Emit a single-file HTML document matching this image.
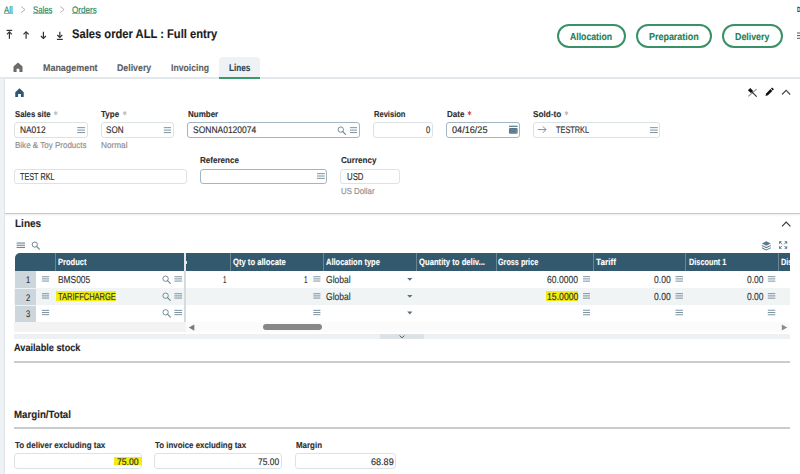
<!DOCTYPE html>
<html><head><meta charset="utf-8"><title>Sales order</title>
<style>
*{box-sizing:border-box;margin:0;padding:0}
html,body{width:800px;height:474px;overflow:hidden;background:#fff;font-family:"Liberation Sans",sans-serif}
body{position:relative}
.t{position:absolute;white-space:nowrap;transform-origin:0 0;text-rendering:geometricPrecision}
.r{position:absolute;overflow:visible}
</style></head><body>
<div class="r" style="left:0px;top:78px;width:4px;height:396px;background:#eef2f4"></div>
<div class="r" style="left:4px;top:78px;width:1px;height:396px;background:#dde3e7"></div>
<div class="t" style="left:4.40px;top:5.50px;font-size:9.45px;line-height:9.45px;color:#2b8663;transform:scaleX(0.828);-webkit-text-stroke:0.15px #2b8663;">All</div>
<div class="t" style="left:32.75px;top:5.50px;font-size:9.45px;line-height:9.45px;color:#2b8663;transform:scaleX(0.825);-webkit-text-stroke:0.15px #2b8663;">Sales</div>
<div class="t" style="left:71.50px;top:5.50px;font-size:9.45px;line-height:9.45px;color:#2b8663;transform:scaleX(0.857);-webkit-text-stroke:0.15px #2b8663;">Orders</div>
<div class="r" style="left:4.4px;top:12.6px;width:8.7px;height:1.0px;background:#86bfa4"></div>
<div class="r" style="left:32.75px;top:12.6px;width:19.5px;height:1.0px;background:#86bfa4"></div>
<div class="r" style="left:71.5px;top:12.6px;width:24.75px;height:1.0px;background:#86bfa4"></div>
<svg class="r" style="left:0;top:0" width="800" height="20"><polyline points="21.2,6.6 25,9.6 21.2,12.6" fill="none" stroke="#b4b4b4" stroke-width="1"/><polyline points="60.3,6.6 64.1,9.6 60.3,12.6" fill="none" stroke="#b4b4b4" stroke-width="1"/></svg>
<svg class="r" style="left:0;top:24px" width="70" height="20" viewBox="0 24 70 20">
<g stroke="#333" stroke-width="1.2" fill="none">
<line x1="6.6" y1="30.4" x2="12.2" y2="30.4"/><line x1="9.4" y1="32" x2="9.4" y2="38.7"/><polyline points="7,34.3 9.4,31.9 11.8,34.3"/>
<line x1="26.1" y1="31.9" x2="26.1" y2="38.7"/><polyline points="23.5,34.4 26.1,31.8 28.7,34.4"/>
<line x1="43.4" y1="31.7" x2="43.4" y2="38.4"/><polyline points="40.9,36 43.4,38.5 45.9,36"/>
<line x1="59.8" y1="31.7" x2="59.8" y2="37.4"/><polyline points="57.3,35 59.8,37.5 62.3,35"/><line x1="56.9" y1="39.4" x2="62.8" y2="39.4"/>
</g></svg>
<div class="t" style="left:71.70px;top:28.00px;font-size:12.50px;line-height:12.50px;font-weight:bold;color:#1a1a1a;transform:scaleX(0.894);-webkit-text-stroke:0.12px #1a1a1a;">Sales order ALL : Full entry</div>
<div class="r" style="left:557px;top:24px;width:69px;height:24px;border:2px solid #3a9168;border-radius:12px"></div>
<div class="r" style="left:635.5px;top:24px;width:76.5px;height:24px;border:2px solid #3a9168;border-radius:12px"></div>
<div class="r" style="left:721.5px;top:24px;width:61.0px;height:24px;border:2px solid #3a9168;border-radius:12px"></div>
<div class="t" style="left:570.00px;top:32.50px;font-size:10.05px;line-height:10.05px;font-weight:bold;color:#1d7f52;transform:scaleX(0.865);-webkit-text-stroke:0.12px #1d7f52;">Allocation</div>
<div class="t" style="left:648.70px;top:32.50px;font-size:10.05px;line-height:10.05px;font-weight:bold;color:#1d7f52;transform:scaleX(0.890);-webkit-text-stroke:0.12px #1d7f52;">Preparation</div>
<div class="t" style="left:734.80px;top:32.50px;font-size:10.05px;line-height:10.05px;font-weight:bold;color:#1d7f52;transform:scaleX(0.879);-webkit-text-stroke:0.12px #1d7f52;">Delivery</div>
<div class="t" style="left:797.40px;top:6.10px;font-size:7.55px;line-height:7.55px;font-weight:bold;color:#1e3f5c;transform:scaleX(0.660);-webkit-text-stroke:0.12px #1e3f5c;">D</div>
<svg class="r" style="left:0;top:0" width="800" height="474"><line x1="797" y1="33.00" x2="804" y2="33.00" stroke="#555" stroke-width="1"/><line x1="797" y1="35.65" x2="804" y2="35.65" stroke="#555" stroke-width="1"/><line x1="797" y1="38.30" x2="804" y2="38.30" stroke="#555" stroke-width="1"/></svg>
<div class="r" style="left:219px;top:57px;width:41px;height:20px;background:#eef2f4;border-radius:4px 4px 0 0"></div>
<svg class="r" style="left:13px;top:62px" width="10" height="10" viewBox="0 0 10 10"><path d="M0.5 4.6 L5 0.5 L9.5 4.6 V10 H6.4 V6.8 H3.6 V10 H0.5 Z" fill="#6b6b6b"/></svg>
<div class="t" style="left:42.60px;top:63.70px;font-size:9.75px;line-height:9.75px;font-weight:bold;color:#5e5e5e;transform:scaleX(0.916);-webkit-text-stroke:0.12px #5e5e5e;">Management</div>
<div class="t" style="left:117.40px;top:63.70px;font-size:9.75px;line-height:9.75px;font-weight:bold;color:#5e5e5e;transform:scaleX(0.901);-webkit-text-stroke:0.12px #5e5e5e;">Delivery</div>
<div class="t" style="left:171.00px;top:63.70px;font-size:9.75px;line-height:9.75px;font-weight:bold;color:#5e5e5e;transform:scaleX(0.888);-webkit-text-stroke:0.12px #5e5e5e;">Invoicing</div>
<div class="t" style="left:228.60px;top:63.50px;font-size:9.90px;line-height:9.90px;font-weight:bold;color:#2a4658;transform:scaleX(0.827);-webkit-text-stroke:0.12px #2a4658;">Lines</div>
<div class="r" style="left:0px;top:77px;width:800px;height:1.5px;background:#e3e8ec"></div>
<div class="r" style="left:219px;top:77px;width:41px;height:2px;background:#3b9a6b"></div>
<svg class="r" style="left:15px;top:88px" width="9" height="9" viewBox="0 0 10 10"><path d="M0.3 4.6 L5 0.3 L9.7 4.6 V10 H6.6 V6.8 H3.4 V10 H0.3 Z" fill="#2b5872"/></svg>
<svg class="r" style="left:740px;top:84px" width="60" height="16" viewBox="740 84 60 16">
<line x1="748.3" y1="96.4" x2="756.6" y2="89.2" stroke="#8f8f8f" stroke-width="1.1"/>
<line x1="751.5" y1="91.6" x2="756.7" y2="96.6" stroke="#2a2a2a" stroke-width="1.1"/>
<path d="M747.9 90.2 L750.3 87.9 L753.2 90.9 L750.9 93.1 Z" fill="#111"/>
<path d="M765.50 95.90 L767.97 95.26 L772.32 90.92 L770.48 89.08 L766.14 93.43 Z" fill="#111"/><line x1="771.89" y1="89.51" x2="773.03" y2="88.37" stroke="#111" stroke-width="2.6" stroke-linecap="butt"/>
<polyline points="782,94.5 786.1,90.3 790.2,94.5" fill="none" stroke="#444" stroke-width="1.1"/>
</svg>
<div class="t" style="left:14.60px;top:109.70px;font-size:8.70px;line-height:8.70px;font-weight:bold;color:#2e2e2e;transform:scaleX(0.889);-webkit-text-stroke:0.12px #2e2e2e;">Sales site</div>
<div class="t" style="left:101.25px;top:109.70px;font-size:8.70px;line-height:8.70px;font-weight:bold;color:#2e2e2e;transform:scaleX(0.923);-webkit-text-stroke:0.12px #2e2e2e;">Type</div>
<div class="t" style="left:188.00px;top:109.70px;font-size:8.70px;line-height:8.70px;font-weight:bold;color:#2e2e2e;transform:scaleX(0.920);-webkit-text-stroke:0.12px #2e2e2e;">Number</div>
<div class="t" style="left:373.90px;top:109.70px;font-size:8.70px;line-height:8.70px;font-weight:bold;color:#2e2e2e;transform:scaleX(0.869);-webkit-text-stroke:0.12px #2e2e2e;">Revision</div>
<div class="t" style="left:446.80px;top:109.70px;font-size:8.70px;line-height:8.70px;font-weight:bold;color:#2e2e2e;transform:scaleX(0.923);-webkit-text-stroke:0.12px #2e2e2e;">Date</div>
<div class="t" style="left:532.90px;top:109.70px;font-size:8.70px;line-height:8.70px;font-weight:bold;color:#2e2e2e;transform:scaleX(0.945);-webkit-text-stroke:0.12px #2e2e2e;">Sold-to</div>
<svg class="r" style="left:0;top:0" width="800" height="474"><line x1="55.80" y1="111.10" x2="55.80" y2="115.30" stroke="#b5b5b5" stroke-width="0.9"/><line x1="53.98" y1="112.15" x2="57.62" y2="114.25" stroke="#b5b5b5" stroke-width="0.9"/><line x1="57.62" y1="112.15" x2="53.98" y2="114.25" stroke="#b5b5b5" stroke-width="0.9"/></svg>
<svg class="r" style="left:0;top:0" width="800" height="474"><line x1="124.80" y1="111.10" x2="124.80" y2="115.30" stroke="#b5b5b5" stroke-width="0.9"/><line x1="122.98" y1="112.15" x2="126.62" y2="114.25" stroke="#b5b5b5" stroke-width="0.9"/><line x1="126.62" y1="112.15" x2="122.98" y2="114.25" stroke="#b5b5b5" stroke-width="0.9"/></svg>
<svg class="r" style="left:0;top:0" width="800" height="474"><line x1="566.45" y1="111.10" x2="566.45" y2="115.30" stroke="#b5b5b5" stroke-width="0.9"/><line x1="564.63" y1="112.15" x2="568.27" y2="114.25" stroke="#b5b5b5" stroke-width="0.9"/><line x1="568.27" y1="112.15" x2="564.63" y2="114.25" stroke="#b5b5b5" stroke-width="0.9"/></svg>
<svg class="r" style="left:0;top:0" width="800" height="474"><line x1="469.50" y1="111.10" x2="469.50" y2="115.30" stroke="#c8434a" stroke-width="0.9"/><line x1="467.68" y1="112.15" x2="471.32" y2="114.25" stroke="#c8434a" stroke-width="0.9"/><line x1="471.32" y1="112.15" x2="467.68" y2="114.25" stroke="#c8434a" stroke-width="0.9"/></svg>
<div class="r" style="left:14px;top:122px;width:74px;height:16px;border:1px solid #dce3e7;border-radius:3px;background:#fff"></div>
<div class="r" style="left:101px;top:122px;width:73px;height:16px;border:1px solid #dce3e7;border-radius:3px;background:#fff"></div>
<div class="r" style="left:187px;top:122px;width:173px;height:16px;border:1px solid #a3b5c0;border-radius:3px;background:#fff"></div>
<div class="r" style="left:373px;top:122px;width:60px;height:16px;border:1px solid #dce3e7;border-radius:3px;background:#fff"></div>
<div class="r" style="left:446px;top:122px;width:74px;height:16px;border:1px solid #a3b5c0;border-radius:3px;background:#fff"></div>
<div class="r" style="left:533px;top:122px;width:127px;height:16px;border:1px solid #dce3e7;border-radius:3px;background:#fff"></div>
<div class="t" style="left:19.80px;top:126.00px;font-size:9.60px;line-height:9.60px;color:#2f2f2f;transform:scaleX(0.872);-webkit-text-stroke:0.15px #2f2f2f;">NA012</div>
<div class="t" style="left:106.00px;top:126.00px;font-size:9.60px;line-height:9.60px;color:#2f2f2f;transform:scaleX(0.841);-webkit-text-stroke:0.15px #2f2f2f;">SON</div>
<div class="t" style="left:192.50px;top:126.00px;font-size:9.60px;line-height:9.60px;color:#2f2f2f;transform:scaleX(0.884);-webkit-text-stroke:0.15px #2f2f2f;">SONNA0120074</div>
<div class="t" style="left:425.60px;top:126.00px;font-size:9.60px;line-height:9.60px;color:#2f2f2f;transform:scaleX(0.788);-webkit-text-stroke:0.15px #2f2f2f;">0</div>
<div class="t" style="left:451.70px;top:126.00px;font-size:9.60px;line-height:9.60px;color:#2f2f2f;transform:scaleX(0.950);-webkit-text-stroke:0.15px #2f2f2f;">04/16/25</div>
<div class="t" style="left:555.60px;top:126.00px;font-size:9.60px;line-height:9.60px;color:#2f2f2f;transform:scaleX(0.767);-webkit-text-stroke:0.15px #2f2f2f;">TESTRKL</div>
<svg class="r" style="left:0;top:0" width="800" height="474"><line x1="77.2" y1="127.65" x2="85" y2="127.65" stroke="#6d8795" stroke-width="0.9"/><line x1="77.2" y1="130.10" x2="85" y2="130.10" stroke="#6d8795" stroke-width="0.9"/><line x1="77.2" y1="132.55" x2="85" y2="132.55" stroke="#6d8795" stroke-width="0.9"/></svg>
<svg class="r" style="left:0;top:0" width="800" height="474"><line x1="163.8" y1="127.65" x2="171" y2="127.65" stroke="#6d8795" stroke-width="0.9"/><line x1="163.8" y1="130.10" x2="171" y2="130.10" stroke="#6d8795" stroke-width="0.9"/><line x1="163.8" y1="132.55" x2="171" y2="132.55" stroke="#6d8795" stroke-width="0.9"/></svg>
<svg class="r" style="left:0;top:0" width="800" height="474"><line x1="350" y1="127.65" x2="357" y2="127.65" stroke="#6d8795" stroke-width="0.9"/><line x1="350" y1="130.10" x2="357" y2="130.10" stroke="#6d8795" stroke-width="0.9"/><line x1="350" y1="132.55" x2="357" y2="132.55" stroke="#6d8795" stroke-width="0.9"/></svg>
<svg class="r" style="left:0;top:0" width="800" height="474"><circle cx="340.8" cy="129.6" r="2.7" fill="none" stroke="#6d8795" stroke-width="0.95"/><line x1="342.69" y1="131.49" x2="345.53" y2="134.32" stroke="#6d8795" stroke-width="1.14" stroke-linecap="round"/></svg>
<svg class="r" style="left:0;top:0" width="800" height="474"><line x1="650" y1="127.65" x2="657.8" y2="127.65" stroke="#6d8795" stroke-width="0.9"/><line x1="650" y1="130.10" x2="657.8" y2="130.10" stroke="#6d8795" stroke-width="0.9"/><line x1="650" y1="132.55" x2="657.8" y2="132.55" stroke="#6d8795" stroke-width="0.9"/></svg>
<svg class="r" style="left:0;top:0" width="800" height="474"><g stroke="#7790a0" stroke-width="1.0" fill="none"><line x1="537.8" y1="129.6" x2="546" y2="129.6"/><polyline points="542.8,126.4 546,129.6 542.8,132.8"/></g></svg>
<svg class="r" style="left:0;top:0" width="800" height="474"><rect x="509" y="125.7" width="8.6" height="1.2" fill="#56778a"/><rect x="509" y="128.1" width="8.6" height="5.7" rx="1.1" fill="#56778a"/><rect x="510.6" y="129.6" width="0.9" height="0.9" fill="#8ea6b4"/><rect x="512.6" y="129.6" width="0.9" height="0.9" fill="#8ea6b4"/><rect x="514.6" y="129.6" width="0.9" height="0.9" fill="#8ea6b4"/><rect x="516.1" y="129.6" width="0.9" height="0.9" fill="#8ea6b4"/><rect x="510.6" y="131.8" width="0.9" height="0.9" fill="#8ea6b4"/><rect x="512.6" y="131.8" width="0.9" height="0.9" fill="#8ea6b4"/><rect x="514.6" y="131.8" width="0.9" height="0.9" fill="#8ea6b4"/><rect x="516.1" y="131.8" width="0.9" height="0.9" fill="#8ea6b4"/></svg>
<div class="t" style="left:14.60px;top:141.00px;font-size:8.70px;line-height:8.70px;color:#8d8d8d;transform:scaleX(0.922);-webkit-text-stroke:0.15px #8d8d8d;">Bike &amp; Toy Products</div>
<div class="t" style="left:101.00px;top:141.00px;font-size:8.70px;line-height:8.70px;color:#8d8d8d;transform:scaleX(0.945);-webkit-text-stroke:0.15px #8d8d8d;">Normal</div>
<div class="t" style="left:200.45px;top:156.20px;font-size:8.70px;line-height:8.70px;font-weight:bold;color:#2e2e2e;transform:scaleX(0.928);-webkit-text-stroke:0.12px #2e2e2e;">Reference</div>
<div class="t" style="left:340.70px;top:156.20px;font-size:8.70px;line-height:8.70px;font-weight:bold;color:#2e2e2e;transform:scaleX(0.929);-webkit-text-stroke:0.12px #2e2e2e;">Currency</div>
<div class="r" style="left:14px;top:169px;width:173px;height:15px;border:1px solid #dce3e7;border-radius:3px;background:#fff"></div>
<div class="r" style="left:200px;top:169px;width:127px;height:15px;border:1px solid #a3b5c0;border-radius:3px;background:#fff"></div>
<div class="r" style="left:340px;top:169px;width:60px;height:15px;border:1px solid #dce3e7;border-radius:3px;background:#fff"></div>
<div class="t" style="left:20.00px;top:173.00px;font-size:10.05px;line-height:10.05px;color:#2f2f2f;transform:scaleX(0.721);-webkit-text-stroke:0.15px #2f2f2f;">TEST RKL</div>
<div class="t" style="left:346.80px;top:173.00px;font-size:10.05px;line-height:10.05px;color:#2f2f2f;transform:scaleX(0.777);-webkit-text-stroke:0.15px #2f2f2f;">USD</div>
<svg class="r" style="left:0;top:0" width="800" height="474"><line x1="317" y1="173.65" x2="324.8" y2="173.65" stroke="#6d8795" stroke-width="0.9"/><line x1="317" y1="176.00" x2="324.8" y2="176.00" stroke="#6d8795" stroke-width="0.9"/><line x1="317" y1="178.35" x2="324.8" y2="178.35" stroke="#6d8795" stroke-width="0.9"/></svg>
<div class="t" style="left:340.70px;top:187.00px;font-size:8.70px;line-height:8.70px;color:#8d8d8d;transform:scaleX(0.902);-webkit-text-stroke:0.15px #8d8d8d;">US Dollar</div>
<div class="r" style="left:5px;top:212.5px;width:795px;height:1.8000000000000114px;background:#c3c9cd;box-shadow:0 1px 2px rgba(0,0,0,0.12)"></div>
<div class="t" style="left:14.50px;top:218.70px;font-size:10.90px;line-height:10.90px;font-weight:bold;color:#1e1e1e;transform:scaleX(0.918);-webkit-text-stroke:0.12px #1e1e1e;">Lines</div>
<svg class="r" style="left:0;top:0" width="800" height="474"><polyline points="782,226.3 786.2,222 790.4,226.3" fill="none" stroke="#333" stroke-width="1.1"/></svg>
<svg class="r" style="left:0;top:0" width="800" height="474"><line x1="16.6" y1="243.05" x2="25" y2="243.05" stroke="#6d8795" stroke-width="1.1"/><line x1="16.6" y1="245.25" x2="25" y2="245.25" stroke="#6d8795" stroke-width="1.1"/><line x1="16.6" y1="247.45" x2="25" y2="247.45" stroke="#6d8795" stroke-width="1.1"/></svg>
<svg class="r" style="left:0;top:0" width="800" height="474"><circle cx="34.8" cy="244.6" r="2.6" fill="none" stroke="#6d8795" stroke-width="1.0"/><line x1="36.62" y1="246.42" x2="39.35" y2="249.15" stroke="#6d8795" stroke-width="1.2" stroke-linecap="round"/></svg>
<svg class="r" style="left:0;top:0" width="800" height="474"><g fill="#5a7a8d">
<path d="M766.3 241.3 L770.8 243.5 L766.3 245.7 L761.8 243.5 Z"/>
<path d="M761.8 244.9 L766.3 247.1 L770.8 244.9 L770.8 246.0 L766.3 248.2 L761.8 246.0 Z"/>
<path d="M761.8 247.2 L766.3 249.4 L770.8 247.2 L770.8 248.3 L766.3 250.5 L761.8 248.3 Z"/>
</g>
<g fill="#5a7a8d">
<path d="M779 241.2 L782 241.2 L779 244.2 Z"/><path d="M787.2 241.2 L784.2 241.2 L787.2 244.2 Z"/>
<path d="M779 248.8 L782 248.8 L779 245.8 Z"/><path d="M787.2 248.8 L784.2 248.8 L787.2 245.8 Z"/>
</g>
<g stroke="#5a7a8d" stroke-width="0.9">
<line x1="780" y1="242.2" x2="782" y2="244.2"/><line x1="786.2" y1="242.2" x2="784.2" y2="244.2"/>
<line x1="780" y1="247.8" x2="782" y2="245.8"/><line x1="786.2" y1="247.8" x2="784.2" y2="245.8"/>
</g></svg>
<div class="r" style="left:14.5px;top:252.9px;width:169.8px;height:18px;background:#32596d;border-radius:5px 0 0 0"></div>
<div class="r" style="left:186.1px;top:252.9px;width:604.1999999999999px;height:17.99999999999997px;background:#32596d"></div>
<div class="r" style="left:35.6px;top:252.9px;width:0.8999999999999986px;height:17.99999999999997px;background:repeating-linear-gradient(#8aa0ac 0 1px,#4a6d80 1px 2px)"></div>
<div class="r" style="left:55.2px;top:252.9px;width:0.7999999999999972px;height:17.99999999999997px;background:#6a8594"></div>
<div class="r" style="left:230.1px;top:252.9px;width:0.8000000000000114px;height:17.99999999999997px;background:#6a8594"></div>
<div class="r" style="left:323.4px;top:252.9px;width:0.8000000000000114px;height:17.99999999999997px;background:#6a8594"></div>
<div class="r" style="left:415.6px;top:252.9px;width:0.8000000000000114px;height:17.99999999999997px;background:#6a8594"></div>
<div class="r" style="left:495.5px;top:252.9px;width:0.8000000000000114px;height:17.99999999999997px;background:#6a8594"></div>
<div class="r" style="left:592.5px;top:252.9px;width:0.7999999999999545px;height:17.99999999999997px;background:#6a8594"></div>
<div class="r" style="left:685.3px;top:252.9px;width:0.7999999999999545px;height:17.99999999999997px;background:#6a8594"></div>
<div class="r" style="left:777.5px;top:252.9px;width:0.7999999999999545px;height:17.99999999999997px;background:#6a8594"></div>
<div class="t" style="left:58.00px;top:257.80px;font-size:9.15px;line-height:9.15px;font-weight:bold;color:#fff;transform:scaleX(0.827);-webkit-text-stroke:0.12px #fff;">Product</div>
<div class="t" style="left:233.10px;top:257.80px;font-size:9.15px;line-height:9.15px;font-weight:bold;color:#fff;transform:scaleX(0.838);-webkit-text-stroke:0.12px #fff;">Qty to allocate</div>
<div class="t" style="left:326.30px;top:257.80px;font-size:9.15px;line-height:9.15px;font-weight:bold;color:#fff;transform:scaleX(0.823);-webkit-text-stroke:0.12px #fff;">Allocation type</div>
<div class="t" style="left:418.60px;top:257.80px;font-size:9.15px;line-height:9.15px;font-weight:bold;color:#fff;transform:scaleX(0.841);-webkit-text-stroke:0.12px #fff;">Quantity to deliv...</div>
<div class="t" style="left:498.00px;top:257.80px;font-size:9.15px;line-height:9.15px;font-weight:bold;color:#fff;transform:scaleX(0.792);-webkit-text-stroke:0.12px #fff;">Gross price</div>
<div class="t" style="left:595.50px;top:257.80px;font-size:9.15px;line-height:9.15px;font-weight:bold;color:#fff;transform:scaleX(0.900);-webkit-text-stroke:0.12px #fff;">Tariff</div>
<div class="t" style="left:688.50px;top:257.80px;font-size:9.15px;line-height:9.15px;font-weight:bold;color:#fff;transform:scaleX(0.802);-webkit-text-stroke:0.12px #fff;">Discount 1</div>
<div class="r" style="left:780px;top:252.9px;width:10.3px;height:18px;overflow:hidden">
<div class="t" style="left:0.60px;top:4.90px;font-size:9.15px;line-height:9.15px;font-weight:bold;color:#fff;transform:scaleX(0.802);-webkit-text-stroke:0.12px #fff;">Discount 1</div>
</div>
<div class="r" style="left:186.1px;top:260.8px;width:1.0999999999999943px;height:3.3999999999999773px;background:#f3e6c8"></div>
<div class="r" style="left:14.3px;top:270.9px;width:776.0px;height:17.100000000000023px;background:#fff"></div>
<div class="r" style="left:14.3px;top:288px;width:776.0px;height:17.100000000000023px;background:#f0f4f5"></div>
<div class="r" style="left:14.3px;top:305.1px;width:776.0px;height:16.69999999999999px;background:#fff"></div>
<div class="r" style="left:14.5px;top:270.9px;width:21.5px;height:50.900000000000034px;background:#cdd6dd"></div>
<div class="r" style="left:14.3px;top:287.6px;width:21.599999999999998px;height:0.7999999999999545px;background:#eef2f4"></div>
<div class="r" style="left:14.3px;top:304.7px;width:21.599999999999998px;height:0.8000000000000114px;background:#eef2f4"></div>
<div class="r" style="left:184.3px;top:270.9px;width:1.799999999999983px;height:50.900000000000034px;background:#d5dce0"></div>
<div class="r" style="left:184.3px;top:252.9px;width:1.799999999999983px;height:17.99999999999997px;background:#e2e7ea"></div>
<div class="t" style="left:26.20px;top:276.40px;font-size:9.60px;line-height:9.60px;color:#333;transform:scaleX(0.788);-webkit-text-stroke:0.15px #333;">1</div>
<svg class="r" style="left:0;top:0" width="800" height="474"><line x1="41.9" y1="276.75" x2="49.1" y2="276.75" stroke="#6d8795" stroke-width="0.9"/><line x1="41.9" y1="278.90" x2="49.1" y2="278.90" stroke="#6d8795" stroke-width="0.9"/><line x1="41.9" y1="281.05" x2="49.1" y2="281.05" stroke="#6d8795" stroke-width="0.9"/></svg>
<svg class="r" style="left:0;top:0" width="800" height="474"><circle cx="165.6" cy="278.7" r="2.7" fill="none" stroke="#6d8795" stroke-width="0.95"/><line x1="167.49" y1="280.59" x2="170.32" y2="283.43" stroke="#6d8795" stroke-width="1.14" stroke-linecap="round"/></svg>
<svg class="r" style="left:0;top:0" width="800" height="474"><line x1="174.4" y1="276.75" x2="182.1" y2="276.75" stroke="#6d8795" stroke-width="0.9"/><line x1="174.4" y1="278.90" x2="182.1" y2="278.90" stroke="#6d8795" stroke-width="0.9"/><line x1="174.4" y1="281.05" x2="182.1" y2="281.05" stroke="#6d8795" stroke-width="0.9"/></svg>
<svg class="r" style="left:0;top:0" width="800" height="474"><line x1="313.3" y1="276.75" x2="320.4" y2="276.75" stroke="#6d8795" stroke-width="0.9"/><line x1="313.3" y1="278.90" x2="320.4" y2="278.90" stroke="#6d8795" stroke-width="0.9"/><line x1="313.3" y1="281.05" x2="320.4" y2="281.05" stroke="#6d8795" stroke-width="0.9"/></svg>
<svg class="r" style="left:0;top:0" width="800" height="474"><path d="M407.2 278 L412.4 278 L409.8 280.8 Z" fill="#4f7186"/></svg>
<svg class="r" style="left:0;top:0" width="800" height="474"><line x1="583" y1="276.65" x2="590" y2="276.65" stroke="#6d8795" stroke-width="0.9"/><line x1="583" y1="278.90" x2="590" y2="278.90" stroke="#6d8795" stroke-width="0.9"/><line x1="583" y1="281.15" x2="590" y2="281.15" stroke="#6d8795" stroke-width="0.9"/></svg>
<svg class="r" style="left:0;top:0" width="800" height="474"><line x1="675.5" y1="276.65" x2="683" y2="276.65" stroke="#6d8795" stroke-width="0.9"/><line x1="675.5" y1="278.90" x2="683" y2="278.90" stroke="#6d8795" stroke-width="0.9"/><line x1="675.5" y1="281.15" x2="683" y2="281.15" stroke="#6d8795" stroke-width="0.9"/></svg>
<svg class="r" style="left:0;top:0" width="800" height="474"><line x1="767.8" y1="276.65" x2="775.3" y2="276.65" stroke="#6d8795" stroke-width="0.9"/><line x1="767.8" y1="278.90" x2="775.3" y2="278.90" stroke="#6d8795" stroke-width="0.9"/><line x1="767.8" y1="281.15" x2="775.3" y2="281.15" stroke="#6d8795" stroke-width="0.9"/></svg>
<div class="t" style="left:26.20px;top:293.60px;font-size:9.60px;line-height:9.60px;color:#333;transform:scaleX(0.788);-webkit-text-stroke:0.15px #333;">2</div>
<svg class="r" style="left:0;top:0" width="800" height="474"><line x1="41.9" y1="293.75" x2="49.1" y2="293.75" stroke="#6d8795" stroke-width="0.9"/><line x1="41.9" y1="295.90" x2="49.1" y2="295.90" stroke="#6d8795" stroke-width="0.9"/><line x1="41.9" y1="298.05" x2="49.1" y2="298.05" stroke="#6d8795" stroke-width="0.9"/></svg>
<svg class="r" style="left:0;top:0" width="800" height="474"><circle cx="165.6" cy="295.7" r="2.7" fill="none" stroke="#6d8795" stroke-width="0.95"/><line x1="167.49" y1="297.59" x2="170.32" y2="300.43" stroke="#6d8795" stroke-width="1.14" stroke-linecap="round"/></svg>
<svg class="r" style="left:0;top:0" width="800" height="474"><line x1="174.4" y1="293.75" x2="182.1" y2="293.75" stroke="#6d8795" stroke-width="0.9"/><line x1="174.4" y1="295.90" x2="182.1" y2="295.90" stroke="#6d8795" stroke-width="0.9"/><line x1="174.4" y1="298.05" x2="182.1" y2="298.05" stroke="#6d8795" stroke-width="0.9"/></svg>
<svg class="r" style="left:0;top:0" width="800" height="474"><line x1="313.3" y1="293.75" x2="320.4" y2="293.75" stroke="#6d8795" stroke-width="0.9"/><line x1="313.3" y1="295.90" x2="320.4" y2="295.90" stroke="#6d8795" stroke-width="0.9"/><line x1="313.3" y1="298.05" x2="320.4" y2="298.05" stroke="#6d8795" stroke-width="0.9"/></svg>
<svg class="r" style="left:0;top:0" width="800" height="474"><path d="M407.2 295 L412.4 295 L409.8 297.8 Z" fill="#4f7186"/></svg>
<svg class="r" style="left:0;top:0" width="800" height="474"><line x1="583" y1="293.65" x2="590" y2="293.65" stroke="#6d8795" stroke-width="0.9"/><line x1="583" y1="295.90" x2="590" y2="295.90" stroke="#6d8795" stroke-width="0.9"/><line x1="583" y1="298.15" x2="590" y2="298.15" stroke="#6d8795" stroke-width="0.9"/></svg>
<svg class="r" style="left:0;top:0" width="800" height="474"><line x1="675.5" y1="293.65" x2="683" y2="293.65" stroke="#6d8795" stroke-width="0.9"/><line x1="675.5" y1="295.90" x2="683" y2="295.90" stroke="#6d8795" stroke-width="0.9"/><line x1="675.5" y1="298.15" x2="683" y2="298.15" stroke="#6d8795" stroke-width="0.9"/></svg>
<svg class="r" style="left:0;top:0" width="800" height="474"><line x1="767.8" y1="293.65" x2="775.3" y2="293.65" stroke="#6d8795" stroke-width="0.9"/><line x1="767.8" y1="295.90" x2="775.3" y2="295.90" stroke="#6d8795" stroke-width="0.9"/><line x1="767.8" y1="298.15" x2="775.3" y2="298.15" stroke="#6d8795" stroke-width="0.9"/></svg>
<div class="t" style="left:26.20px;top:309.90px;font-size:9.60px;line-height:9.60px;color:#333;transform:scaleX(0.788);-webkit-text-stroke:0.15px #333;">3</div>
<svg class="r" style="left:0;top:0" width="800" height="474"><line x1="41.9" y1="310.35" x2="49.1" y2="310.35" stroke="#6d8795" stroke-width="0.9"/><line x1="41.9" y1="312.50" x2="49.1" y2="312.50" stroke="#6d8795" stroke-width="0.9"/><line x1="41.9" y1="314.65" x2="49.1" y2="314.65" stroke="#6d8795" stroke-width="0.9"/></svg>
<svg class="r" style="left:0;top:0" width="800" height="474"><circle cx="165.6" cy="312.3" r="2.7" fill="none" stroke="#6d8795" stroke-width="0.95"/><line x1="167.49" y1="314.19" x2="170.32" y2="317.03" stroke="#6d8795" stroke-width="1.14" stroke-linecap="round"/></svg>
<svg class="r" style="left:0;top:0" width="800" height="474"><line x1="174.4" y1="310.35" x2="182.1" y2="310.35" stroke="#6d8795" stroke-width="0.9"/><line x1="174.4" y1="312.50" x2="182.1" y2="312.50" stroke="#6d8795" stroke-width="0.9"/><line x1="174.4" y1="314.65" x2="182.1" y2="314.65" stroke="#6d8795" stroke-width="0.9"/></svg>
<svg class="r" style="left:0;top:0" width="800" height="474"><line x1="313.3" y1="310.35" x2="320.4" y2="310.35" stroke="#6d8795" stroke-width="0.9"/><line x1="313.3" y1="312.50" x2="320.4" y2="312.50" stroke="#6d8795" stroke-width="0.9"/><line x1="313.3" y1="314.65" x2="320.4" y2="314.65" stroke="#6d8795" stroke-width="0.9"/></svg>
<svg class="r" style="left:0;top:0" width="800" height="474"><path d="M407.2 311.6 L412.4 311.6 L409.8 314.40000000000003 Z" fill="#4f7186"/></svg>
<svg class="r" style="left:0;top:0" width="800" height="474"><line x1="583" y1="310.25" x2="590" y2="310.25" stroke="#6d8795" stroke-width="0.9"/><line x1="583" y1="312.50" x2="590" y2="312.50" stroke="#6d8795" stroke-width="0.9"/><line x1="583" y1="314.75" x2="590" y2="314.75" stroke="#6d8795" stroke-width="0.9"/></svg>
<svg class="r" style="left:0;top:0" width="800" height="474"><line x1="675.5" y1="310.25" x2="683" y2="310.25" stroke="#6d8795" stroke-width="0.9"/><line x1="675.5" y1="312.50" x2="683" y2="312.50" stroke="#6d8795" stroke-width="0.9"/><line x1="675.5" y1="314.75" x2="683" y2="314.75" stroke="#6d8795" stroke-width="0.9"/></svg>
<svg class="r" style="left:0;top:0" width="800" height="474"><line x1="767.8" y1="310.25" x2="775.3" y2="310.25" stroke="#6d8795" stroke-width="0.9"/><line x1="767.8" y1="312.50" x2="775.3" y2="312.50" stroke="#6d8795" stroke-width="0.9"/><line x1="767.8" y1="314.75" x2="775.3" y2="314.75" stroke="#6d8795" stroke-width="0.9"/></svg>
<div class="t" style="left:58.00px;top:276.20px;font-size:10.15px;line-height:10.15px;color:#333;transform:scaleX(0.829);-webkit-text-stroke:0.15px #333;">BMS005</div>
<div class="r" style="left:55.7px;top:291.4px;width:60.3px;height:9.5px;background:#f2ec10"></div>
<div class="t" style="left:58.00px;top:293.20px;font-size:10.15px;line-height:10.15px;color:#333;transform:scaleX(0.742);-webkit-text-stroke:0.15px #333;">TARIFFCHARGE</div>
<div class="t" style="left:223.10px;top:276.20px;font-size:10.15px;line-height:10.15px;color:#333;transform:scaleX(0.604);-webkit-text-stroke:0.15px #333;">1</div>
<div class="t" style="left:303.90px;top:276.20px;font-size:10.15px;line-height:10.15px;color:#333;transform:scaleX(0.639);-webkit-text-stroke:0.15px #333;">1</div>
<div class="t" style="left:326.30px;top:276.20px;font-size:10.15px;line-height:10.15px;color:#333;transform:scaleX(0.842);-webkit-text-stroke:0.15px #333;">Global</div>
<div class="t" style="left:326.30px;top:293.20px;font-size:10.15px;line-height:10.15px;color:#333;transform:scaleX(0.842);-webkit-text-stroke:0.15px #333;">Global</div>
<div class="t" style="left:547.00px;top:276.20px;font-size:10.15px;line-height:10.15px;color:#333;transform:scaleX(0.845);-webkit-text-stroke:0.15px #333;">60.0000</div>
<div class="r" style="left:545.5px;top:291.3px;width:32.700000000000045px;height:10.0px;background:#f2ec10"></div>
<div class="t" style="left:546.50px;top:293.20px;font-size:10.15px;line-height:10.15px;color:#333;transform:scaleX(0.858);-webkit-text-stroke:0.15px #333;">15.0000</div>
<div class="t" style="left:653.75px;top:276.20px;font-size:10.15px;line-height:10.15px;color:#333;transform:scaleX(0.847);-webkit-text-stroke:0.15px #333;">0.00</div>
<div class="t" style="left:746.70px;top:276.20px;font-size:10.15px;line-height:10.15px;color:#333;transform:scaleX(0.835);-webkit-text-stroke:0.15px #333;">0.00</div>
<div class="t" style="left:653.75px;top:293.20px;font-size:10.15px;line-height:10.15px;color:#333;transform:scaleX(0.847);-webkit-text-stroke:0.15px #333;">0.00</div>
<div class="t" style="left:746.70px;top:293.20px;font-size:10.15px;line-height:10.15px;color:#333;transform:scaleX(0.835);-webkit-text-stroke:0.15px #333;">0.00</div>
<div class="r" style="left:14.3px;top:321.8px;width:171.7px;height:10.399999999999977px;background:#f3f3f3"></div>
<div class="r" style="left:186px;top:321.8px;width:604.3px;height:10.399999999999977px;background:#fbfbfb"></div>
<div class="r" style="left:262.6px;top:324.2px;width:59.799999999999955px;height:6.300000000000011px;background:#878787;border-radius:3.2px"></div>
<svg class="r" style="left:0;top:0" width="800" height="474"><path d="M194.3 324.4 L194.3 330.8 L188.8 327.6 Z" fill="#7a7a7a"/><path d="M781.8 324.6 L781.8 330.6 L787.2 327.6 Z" fill="#8a8a8a"/></svg>
<div class="r" style="left:14.3px;top:334.3px;width:776.0px;height:5.0px;background:#eef1f3"></div>
<div class="r" style="left:380.3px;top:334.3px;width:43.69999999999999px;height:5.0px;background:#dde2e6"></div>
<svg class="r" style="left:0;top:0" width="800" height="474"><polyline points="399.5,335.6 402,337.8 404.5,335.6" fill="none" stroke="#555" stroke-width="0.9"/></svg>
<div class="t" style="left:14.30px;top:344.00px;font-size:10.30px;line-height:10.30px;font-weight:bold;color:#1e1e1e;transform:scaleX(0.891);-webkit-text-stroke:0.12px #1e1e1e;">Available stock</div>
<div class="r" style="left:14.3px;top:361px;width:776.2px;height:1.8000000000000114px;background:#c9cdd0"></div>
<div class="t" style="left:14.30px;top:409.70px;font-size:10.60px;line-height:10.60px;font-weight:bold;color:#1e1e1e;transform:scaleX(0.916);-webkit-text-stroke:0.12px #1e1e1e;">Margin/Total</div>
<div class="r" style="left:14.3px;top:427.4px;width:776.2px;height:1.8000000000000114px;background:#c9cdd0"></div>
<div class="t" style="left:14.60px;top:441.20px;font-size:8.70px;line-height:8.70px;font-weight:bold;color:#2e2e2e;transform:scaleX(0.918);-webkit-text-stroke:0.12px #2e2e2e;">To deliver excluding tax</div>
<div class="t" style="left:155.40px;top:441.20px;font-size:8.70px;line-height:8.70px;font-weight:bold;color:#2e2e2e;transform:scaleX(0.909);-webkit-text-stroke:0.12px #2e2e2e;">To invoice excluding tax</div>
<div class="t" style="left:296.10px;top:441.20px;font-size:8.70px;line-height:8.70px;font-weight:bold;color:#2e2e2e;transform:scaleX(0.912);-webkit-text-stroke:0.12px #2e2e2e;">Margin</div>
<div class="r" style="left:14px;top:453px;width:128px;height:16px;border:1px solid #dce3e7;border-radius:3px;background:#fff"></div>
<div class="r" style="left:154px;top:453px;width:128px;height:16px;border:1px solid #dce3e7;border-radius:3px;background:#fff"></div>
<div class="r" style="left:295px;top:453px;width:101px;height:16px;border:1px solid #dce3e7;border-radius:3px;background:#fff"></div>
<div class="r" style="left:114.4px;top:456.6px;width:27.19999999999999px;height:8.699999999999989px;background:#f2ec10"></div>
<div class="t" style="left:117.20px;top:457.60px;font-size:9.60px;line-height:9.60px;color:#2f2f2f;transform:scaleX(0.897);-webkit-text-stroke:0.15px #2f2f2f;">75.00</div>
<div class="t" style="left:257.80px;top:457.60px;font-size:9.60px;line-height:9.60px;color:#2f2f2f;transform:scaleX(0.878);-webkit-text-stroke:0.15px #2f2f2f;">75.00</div>
<div class="t" style="left:370.90px;top:457.60px;font-size:9.60px;line-height:9.60px;color:#2f2f2f;transform:scaleX(0.945);-webkit-text-stroke:0.15px #2f2f2f;">68.89</div>
</body></html>
